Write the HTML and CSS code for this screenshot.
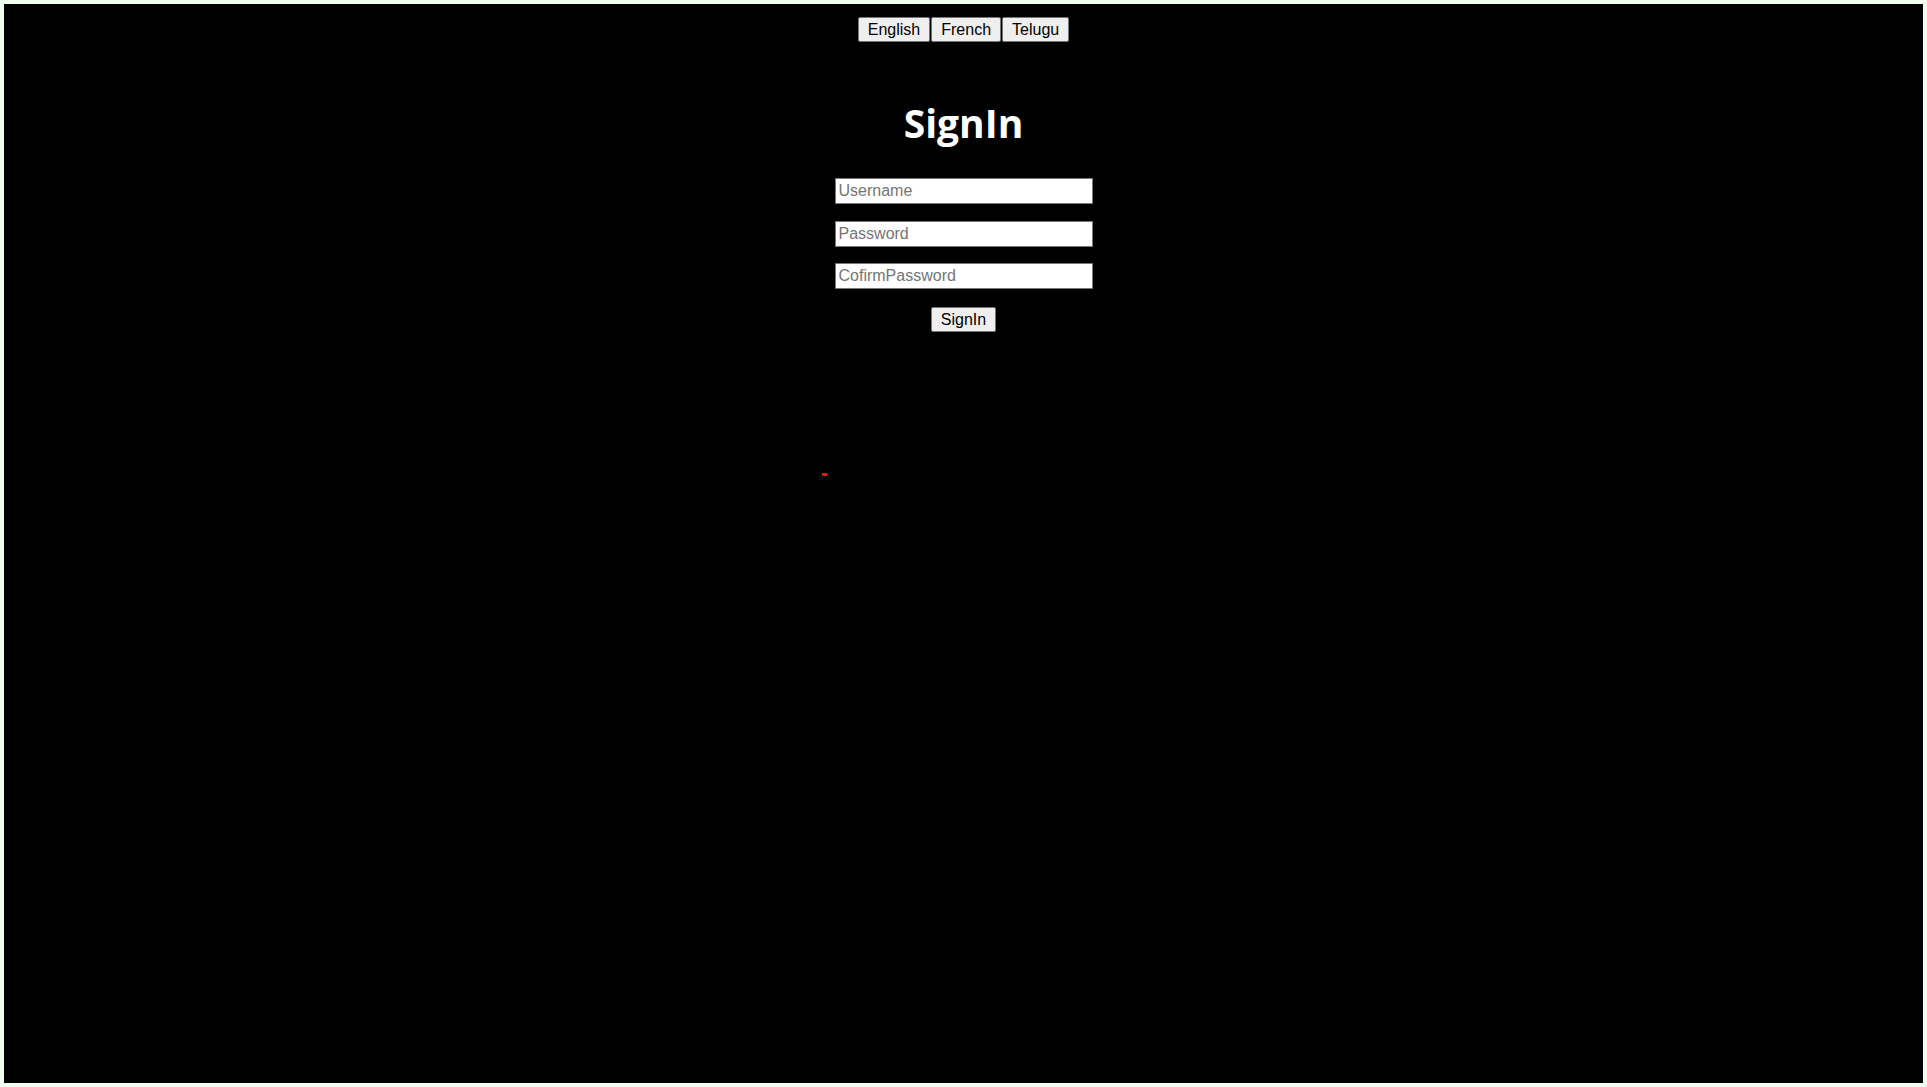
FILE: index.html
```html
<!DOCTYPE html>
<html lang="en">
<head>
<meta charset="utf-8">
<title>SignIn</title>
<link rel="stylesheet" href="styles.css">
</head>
<body>
<div class="page">
  <div class="langs">
    <button class="btn" type="button">English</button>
    <button class="btn" type="button">French</button>
    <button class="btn" type="button">Telugu</button>
  </div>
  <h1 class="title">SignIn</h1>
  <form class="form">
    <input class="field" type="text" placeholder="Username">
    <input class="field" type="password" placeholder="Password">
    <input class="field" type="password" placeholder="CofirmPassword">
    <button class="btn submit" type="button">SignIn</button>
  </form>
  <div class="error"><span class="error-dot"></span></div>
</div>
</body>
</html>
```

FILE: styles.css
```css
html, body {
  height: 100%;
}
body {
  margin: 0;
  padding: 4px;
  box-sizing: border-box;
  background: #f0fff0;
}
.page {
  height: 100%;
  background: #000;
  display: flex;
  flex-direction: column;
  align-items: center;
  padding-top: 13px;
  box-sizing: border-box;
}
.langs {
  display: flex;
  gap: 1px;
}
.btn {
  font-family: "Liberation Sans", Arial, sans-serif;
  font-size: 16px;
  line-height: 18px;
  height: 25px;
  padding: 2px 9px;
  box-sizing: border-box;
  background: #efefef;
  color: #000;
  border: 1px solid #767676;
  border-radius: 2px;
  margin: 0;
}
.title {
  font-family: "Open Sans", "Noto Sans", sans-serif;
  font-weight: 700;
  font-size: 39px;
  line-height: 52px;
  color: #fff;
  margin: 55px 0 29px;
}
.form {
  display: flex;
  flex-direction: column;
  align-items: center;
  gap: 16.5px;
}
.field {
  width: 258px;
  height: 26px;
  box-sizing: border-box;
  border: 1px solid #767676;
  padding: 0 3px;
  margin: 0;
  font-family: "Liberation Sans", Arial, sans-serif;
  font-size: 16px;
  background: #fff;
  color: #000;
}
.field::placeholder {
  color: #757575;
}
.submit {
  margin-top: 1.5px;
}
.error {
  width: 284px;
  margin-top: 141px;
  display: flex;
}
.error-dot {
  width: 5px;
  height: 3px;
  background: #e61414;
}
```
